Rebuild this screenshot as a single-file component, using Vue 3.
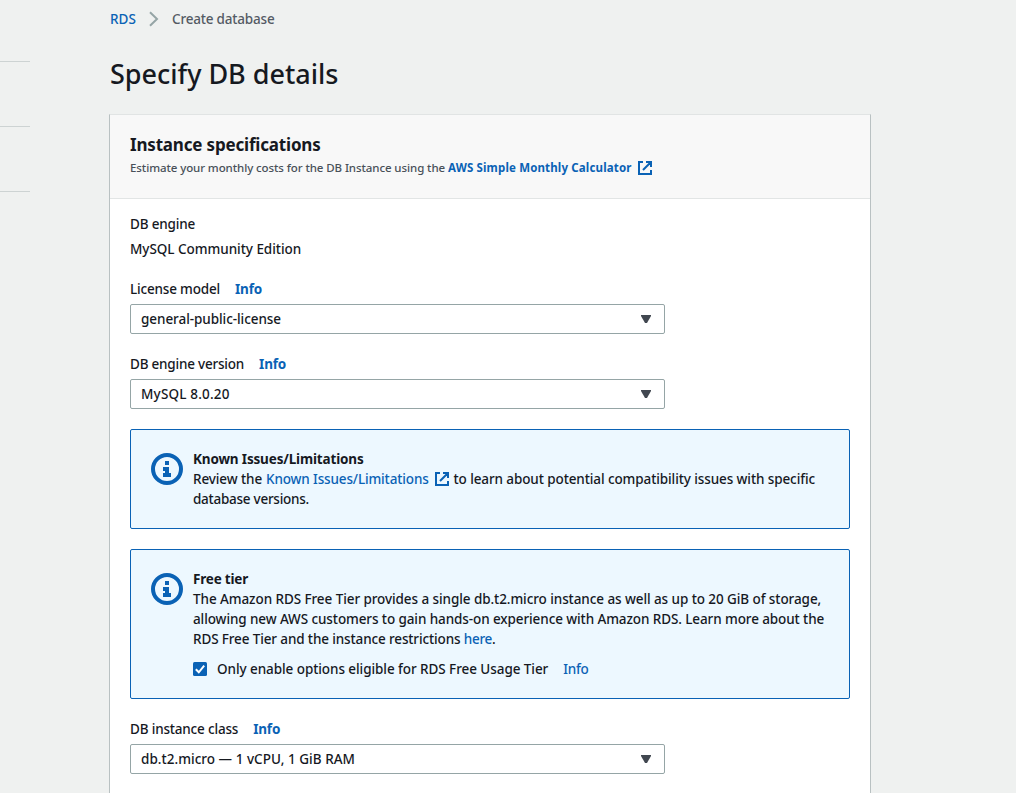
<script setup>
const version = [
  { label: 'License model', value: 'general-public-license', key: 'license' },
  { label: 'DB engine version', value: 'MySQL 8.0.20', key: 'version' }
]
const instance = [
  { label: 'DB instance class', value: 'db.t2.micro — 1 vCPU, 1 GiB RAM', key: 'class' }
]
</script>

<template>
  <div class="page">
    <aside class="rail"><i></i><i></i><i></i></aside>
    <main class="main">
      <nav class="crumbs">
        <a class="rds">RDS</a>
        <svg class="chev" width="10" height="16" viewBox="0 0 10 16"><path d="M1 1.2 8 8 1 14.8" fill="none" stroke="#95a5a6" stroke-width="2" /></svg>
        <span class="current">Create database</span>
      </nav>
      <h1>Specify DB details</h1>

      <section class="card">
        <header>
          <h2>Instance specifications</h2>
          <p class="sub">
            <span class="est">Estimate your monthly costs for the DB Instance using the</span>
            <a class="calc">AWS Simple Monthly Calculator</a>
            <svg class="ext" width="14" height="14" viewBox="0 0 14 14"><path d="M5 1H1v12h12V9M8 1h5v5M13 1 5 9" fill="none" stroke="currentColor" stroke-width="2" /></svg>
          </p>
        </header>

        <div class="body">
          <div class="engine">
            <div class="label">DB engine</div>
            <div class="edition">MySQL Community Edition</div>
          </div>

          <div v-for="f in version" :key="f.key" class="field">
            <div class="caption"><span class="label" :class="'l-' + f.key">{{ f.label }}</span><a class="info">Info</a></div>
            <div class="select">
              <span :class="'v-' + f.key">{{ f.value }}</span>
              <svg width="10" height="8" viewBox="0 0 10 8"><path d="M0 0h10v1L6 8H4L0 1z" fill="#414750" /></svg>
            </div>
          </div>

          <div class="alert">
            <svg class="big" width="32" height="32" viewBox="0 0 32 32"><circle cx="16" cy="16" r="14" fill="none" stroke="#0a62b5" stroke-width="4" /><path d="M14 8h4v4h-4zM12 14h6v6h2v4h-8v-4h2v-2h-2z" fill="#0a62b5" /></svg>
            <div class="text">
              <strong class="known">Known Issues/Limitations</strong>
              <div class="line review">
                <span>Review the</span>
                <a class="klink">Known Issues/Limitations</a>
                <svg class="ext" width="14" height="14" viewBox="0 0 14 14"><path d="M5 1H1v12h12V9M8 1h5v5M13 1 5 9" fill="none" stroke="currentColor" stroke-width="2" /></svg>
                <span>to learn about potential compatibility issues with specific</span>
              </div>
              <div class="line dbv">database versions.</div>
            </div>
          </div>

          <div class="alert">
            <svg class="big" width="32" height="32" viewBox="0 0 32 32"><circle cx="16" cy="16" r="14" fill="none" stroke="#0a62b5" stroke-width="4" /><path d="M14 8h4v4h-4zM12 14h6v6h2v4h-8v-4h2v-2h-2z" fill="#0a62b5" /></svg>
            <div class="text">
              <strong class="free">Free tier</strong>
              <div class="line l1">The Amazon RDS Free Tier provides a single db.t2.micro instance as well as up to 20 GiB of storage,</div>
              <div class="line">allowing new AWS customers to gain hands-on experience with Amazon RDS. Learn more about the</div>
              <div class="line l3">RDS Free Tier and the instance restrictions <a class="here">here</a>.</div>
              <div class="check">
                <svg width="14" height="14" viewBox="0 0 14 14"><rect width="14" height="14" rx="1.5" fill="#0a62b5" /><path d="M2.8 7.3 5.8 10.3 11.2 3.6" fill="none" stroke="#fff" stroke-width="2" /></svg>
                <span class="only">Only enable options eligible for RDS Free Usage Tier</span>
                <a class="plain">Info</a>
              </div>
            </div>
          </div>

          <div v-for="f in instance" :key="f.key" class="field">
            <div class="caption"><span class="label" :class="'l-' + f.key">{{ f.label }}</span><a class="info">Info</a></div>
            <div class="select">
              <span :class="'v-' + f.key">{{ f.value }}</span>
              <svg width="10" height="8" viewBox="0 0 10 8"><path d="M0 0h10v1L6 8H4L0 1z" fill="#414750" /></svg>
            </div>
          </div>
        </div>
      </section>
    </main>
  </div>
</template>

<style>
body { margin: 0; overflow: hidden; background: #eff1f0; }
</style>

<style scoped>
* { box-sizing: border-box; }
.page { width: 1016px; height: 793px; overflow: hidden; display: flex; background: #eff1f0; color: #16191f; font: 500 13.5px/20px "Noto Sans", sans-serif; letter-spacing: -0.1px; white-space: nowrap; }
.rail { width: 30px; margin-right: 79px; padding-top: 61px; flex: none; }
.rail i { display: block; height: 1px; background: #cdd3d3; margin-bottom: 64px; }
.main { width: 762px; flex: none; padding-top: 9px; }
a { color: #0a62b5; }
.crumbs { display: flex; align-items: center; height: 20px; padding-left: 1px; }
.rds { width: 39px; letter-spacing: 0.06px; }
.chev { margin-right: 13px; }
.current { color: #545b64; letter-spacing: -0.19px; }
h1 { margin: 27px 0 22px 1px; font-size: 27px; line-height: 36px; font-weight: 500; letter-spacing: -0.02px; }
.card { height: 900px; background: #fff; border: 1px solid #b9c1c2; border-top-color: #e1e4e4; }
header { height: 84px; padding: 19px 20px 0; background: #f8f8f8; border-bottom: 1px solid #e2e5e5; }
h2 { margin: 0; font-size: 17px; line-height: 22px; font-weight: 700; letter-spacing: -0.18px; }
.sub { display: flex; align-items: center; margin: 4px 0 0; font-size: 11.5px; line-height: 16px; color: #485058; }
.est { width: 318px; letter-spacing: -0.09px; }
.calc { width: 190px; font-weight: 700; letter-spacing: 0.15px; }
.ext { display: block; flex: none; color: #0a62b5; }
.body { padding: 15px 20px; }
.label { letter-spacing: -0.18px; }
.edition { margin-top: 5px; letter-spacing: -0.04px; }
.field { margin-top: 20px; }
.l-version { letter-spacing: -0.21px; }
.caption { height: 20px; }
.info { margin-left: 15px; font-weight: 700; letter-spacing: -0.17px; }
.select { display: flex; align-items: center; justify-content: space-between; width: 535px; height: 30px; margin-top: 5px; padding: 0 13px 0 10px; border: 1px solid #95a5a6; border-radius: 2px; background: #fff; }
.v-license { letter-spacing: -0.06px; }
.v-version { letter-spacing: 0.18px; }
.v-class { letter-spacing: 0.03px; }
.alert { display: flex; gap: 10px; width: 720px; margin-top: 20px; padding: 19px 20px; border: 1px solid #0a62b5; border-radius: 2px; background: #edf8ff; }
.big { flex: none; margin-top: 4px; }
.text strong { display: block; font-weight: 700; letter-spacing: -0.16px; }
.text .free { letter-spacing: -0.2px; }
.line { height: 20px; }
.review { display: flex; align-items: center; }
.review span:first-child { width: 73px; }
.klink { width: 169px; letter-spacing: -0.14px; }
.review .ext { margin-right: 4.5px; }
.dbv { letter-spacing: -0.26px; }
.l1 { letter-spacing: -0.08px; }
.l3 { letter-spacing: -0.13px; }
.here { letter-spacing: -0.3px; }
.check { display: flex; align-items: center; height: 20px; margin-top: 10px; }
.only { margin-left: 10px; letter-spacing: -0.07px; }
.plain { margin-left: 15px; letter-spacing: -0.25px; }
</style>
